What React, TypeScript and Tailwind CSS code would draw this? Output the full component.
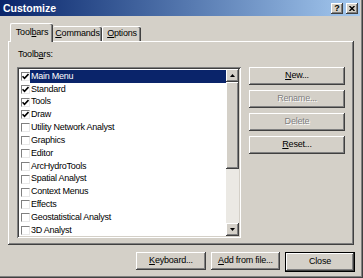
import React from 'react';

const font = { fontFamily: '"Liberation Sans", Arial, sans-serif' };

const rows = [
  { name: 'Main Menu', checked: true },
  { name: 'Standard', checked: true },
  { name: 'Tools', checked: true },
  { name: 'Draw', checked: true },
  { name: 'Utility Network Analyst', checked: false },
  { name: 'Graphics', checked: false },
  { name: 'Editor', checked: false },
  { name: 'ArcHydroTools', checked: false },
  { name: 'Spatial Analyst', checked: false },
  { name: 'Context Menus', checked: false },
  { name: 'Effects', checked: false },
  { name: 'Geostatistical Analyst', checked: false },
  { name: '3D Analyst', checked: false },
];

// classic raised 3d edge
const raised =
  'bg-[#d4d0c8] shadow-[inset_-1px_-1px_#404040,inset_1px_1px_#ffffff,inset_-2px_-2px_#808080,inset_2px_2px_#d4d0c8]';

const Button = ({
  children,
  disabled,
  className = '',
}: {
  children: React.ReactNode;
  disabled?: boolean;
  className?: string;
}) => (
  <div
    className={`flex h-[18px] items-center justify-center text-[9px] tracking-[-0.2px] ${raised} ${
      disabled ? 'text-[#808080] [text-shadow:1px_1px_#ffffff]' : 'text-black'
    } ${className}`}
  >
    {children}
  </div>
);

const Check = ({ checked }: { checked: boolean }) => (
  <div className="flex h-[9px] w-[9px] shrink-0 items-center justify-center border-t border-l border-[#808080] border-r-[#e8e8e8] border-b-[#e8e8e8] border-r border-b bg-white">
    {checked && (
      <svg width="7" height="7" viewBox="0 0 7 7">
        <path d="M0.5 3.2 L2.5 5.3 L6.5 1" fill="none" stroke="#000" strokeWidth="1.6" />
      </svg>
    )}
  </div>
);

const Arrow = ({ up }: { up?: boolean }) => (
  <div className={`flex h-[13px] w-[13px] shrink-0 items-center justify-center ${raised}`}>
    <svg width="5" height="3" viewBox="0 0 5 3">
      <path d={up ? 'M0 3 L2.5 0 L5 3 Z' : 'M0 0 L2.5 3 L5 0 Z'} fill="#000" />
    </svg>
  </div>
);

export default function App() {
  return (
    <div
      className="flex h-[278px] w-[363px] flex-col bg-[#d4d0c8] pr-[3px] pb-[2px] shadow-[inset_-1px_-1px_#404040,inset_-2px_-2px_#808080]"
      style={font}
    >
      {/* title bar */}
      <div className="flex h-[16px] shrink-0 items-center bg-gradient-to-r from-[#0a246a] to-[#a6caf0] pl-[3px] pr-[2px]">
        <span className="text-[10.5px] font-bold leading-none text-white">Customize</span>
        <div className="ml-auto flex gap-[3px]">
          <div className={`flex h-[11px] w-[12px] items-center justify-center text-[9px] font-bold leading-none text-black ${raised}`}>
            ?
          </div>
          <div className={`flex h-[11px] w-[12px] items-center justify-center ${raised}`}>
            <svg width="6" height="5" viewBox="0 0 6 5">
              <path d="M0.5 0 L5.5 5 M5.5 0 L0.5 5" stroke="#000" strokeWidth="1.4" />
            </svg>
          </div>
        </div>
      </div>

      {/* tabs */}
      <div className="mt-[6px] flex h-[19px] items-end pl-[10px] text-[9px] tracking-[-0.2px]">
        <div className="relative z-10 -mb-px flex h-[19px] w-[43px] items-center justify-center rounded-t-[2px] border-t border-l border-white bg-[#d4d0c8] pb-[1px] shadow-[inset_-1px_0_#404040,inset_-2px_0_#808080]">
          Tool<span className="underline">b</span>ars
        </div>
        <div className="flex h-[15px] w-[49px] items-center justify-center rounded-t-[2px] border-t border-white shadow-[inset_-1px_0_#404040,inset_-2px_0_#808080]">
          <span className="underline">C</span>ommands
        </div>
        <div className="flex h-[15px] w-[39px] items-center justify-center rounded-t-[2px] border-t border-l border-white shadow-[inset_-1px_0_#404040,inset_-2px_0_#808080]">
          <span className="underline">O</span>ptions
        </div>
      </div>

      {/* tab panel */}
      <div className="ml-[8px] flex h-[204px] w-[346px] flex-col pl-[9px] pt-[8px] shadow-[inset_-1px_-1px_#404040,inset_1px_1px_#ffffff,inset_-2px_-2px_#808080]">
        <div className="ml-px h-[11px] text-[9px] leading-[11px] tracking-[-0.2px]">
          Toolb<span className="underline">a</span>rs:
        </div>
        <div className="mt-[7px] flex gap-[8px]">
          {/* list box */}
          <div className="flex h-[171px] w-[224px] bg-white p-[2px] shadow-[inset_1px_1px_#808080,inset_-1px_-1px_#ffffff,inset_2px_2px_#404040,inset_-2px_-2px_#d4d0c8]">
            <div className="flex flex-1 flex-col pt-px">
              {rows.map((r, i) => (
                <div key={r.name} className="flex h-[12.85px] items-center pl-[2px]">
                  <Check checked={r.checked} />
                  <div
                    className={`flex h-full flex-1 items-center pl-px text-[9px] tracking-[-0.25px] ${
                      i === 0 ? 'bg-[#0a246a] text-white' : 'text-black'
                    }`}
                  >
                    {r.name}
                  </div>
                </div>
              ))}
            </div>
            {/* scrollbar */}
            <div className="flex w-[13px] flex-col bg-[#ebe9e4]">
              <Arrow up />
              <div className={`h-[87px] ${raised}`} />
              <div className="flex-1" />
              <Arrow />
            </div>
          </div>

          {/* side buttons */}
          <div className="flex w-[96px] flex-col gap-[5px]">
            <Button>
              <span className="underline">N</span>ew...
            </Button>
            <Button disabled>Rename...</Button>
            <Button disabled>Delete</Button>
            <Button>
              <span className="underline">R</span>eset...
            </Button>
          </div>
        </div>
      </div>

      {/* bottom buttons */}
      <div className="mt-[7px] flex justify-end gap-[5px] pr-[5px]">
        <Button className="w-[70px]">
          <span className="underline">K</span>eyboard...
        </Button>
        <Button className="w-[69px]">
          <span className="underline">A</span>dd from file...
        </Button>
        <div className="border border-black">
          <Button className="h-[16px] w-[68px]">Close</Button>
        </div>
      </div>
    </div>
  );
}
